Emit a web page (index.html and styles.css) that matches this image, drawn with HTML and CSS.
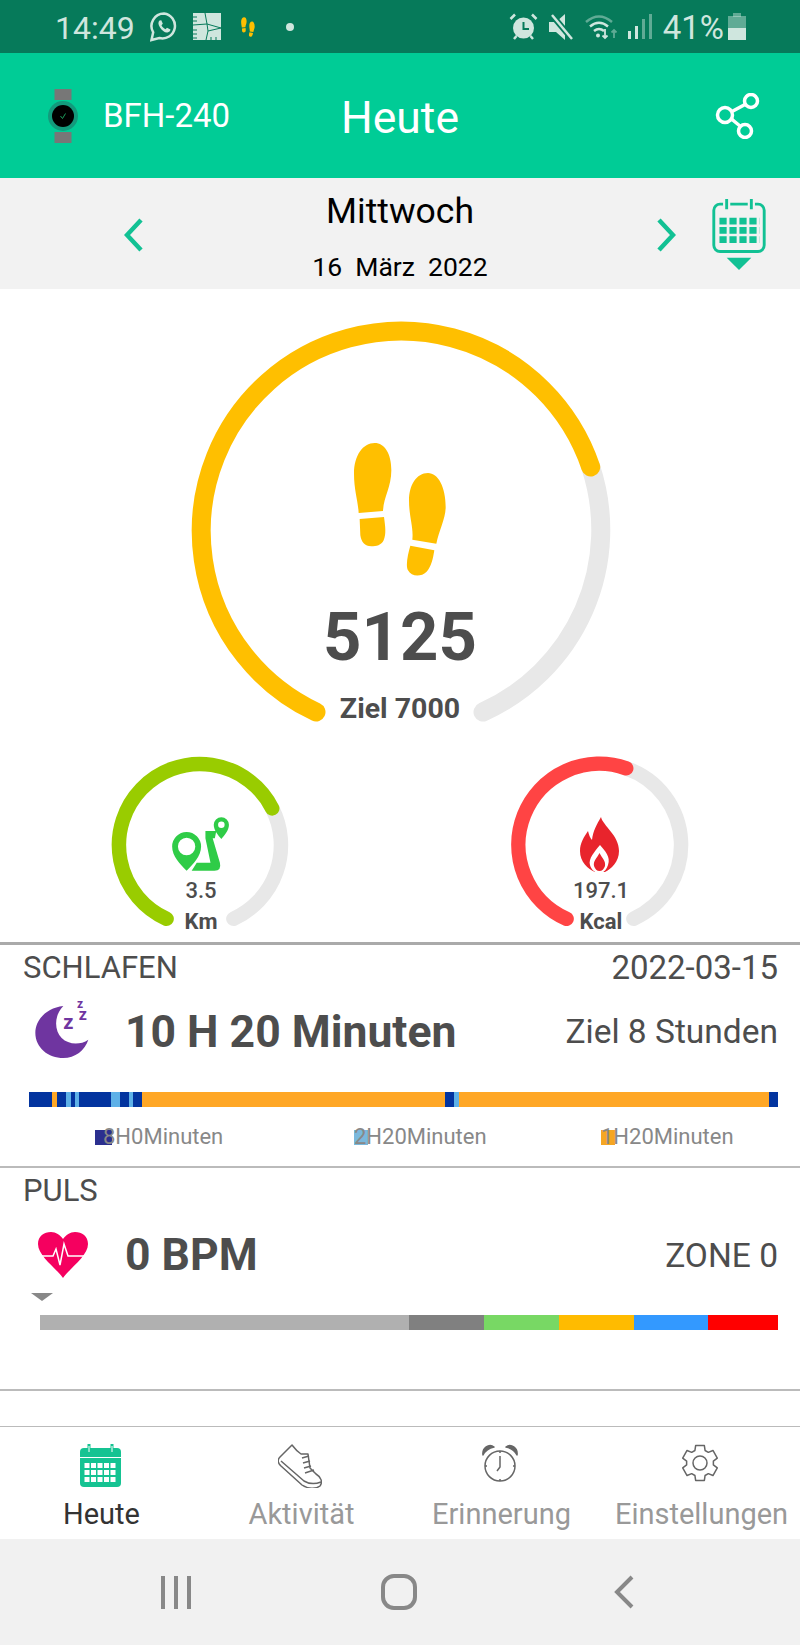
FILE: index.html
```html
<!DOCTYPE html>
<html lang="de">

<head>
    <meta charset="UTF-8" />
    <meta name="viewport" content="width=device-width, initial-scale=1.0" />
    <title>Heute</title>
    <link rel="stylesheet" href="styles.css">
</head>

<body>
    <div class="status">
        <span class="status-time">14:49</span>
        <svg class="st-whatsapp" width="28" height="30" viewBox="0 0 28 30">
            <path class="st-line" d="M14 1.5A12.5 12.5 0 0 0 3.2 20.3L1.5 28l7.8-2a12.5 12.5 0 1 0 4.7-24.5z" />
            <path class="st-fill" d="M9.5 8.5c-1.5 1.5-1.5 4 .5 7s5 5.5 7.5 5c1.5-.3 3-1.5 3-3l-3.5-1.8-1.5 1.5c-1.500-.6-3.500-2.500-4-4l1.300-1.500-1.500-3.500z" />
        </svg>
        <svg class="st-patch" width="28" height="27" viewBox="0 0 28 27">
            <rect class="st-fill" width="28" height="27" />
            <path class="st-cut" d="M12 0L14 11L28 15M14 11L0 12M14 11L15 18L13 27M15 18L28 15M0 4H4M0 8H4M0 17H4M0 21H4M0 25H4M18 27V24M23 27V24" />
        </svg>
        <svg class="st-feet icon-steps" width="16" height="20" viewBox="520 395 285 405"><use href="#steps" /></svg>
        <span class="status-dot"></span>

        <svg class="st-alarm" width="29" height="27" viewBox="0 0 29 27">
            <circle class="st-fill" cx="14.500" cy="15" r="10.500" />
            <path class="st-hand" d="M14.500 9V16H20" />
            <path class="st-line" d="M1.500 6L6 1.500M27.500 6L23 1.500M5 26L7.500 23M24 26L21.500 23" />
        </svg>
        <svg class="st-mute" width="25" height="26" viewBox="0 0 25 26">
            <path class="st-fill" d="M0 8h7L16 0v26L7 18H0z" />
            <path class="st-gap" d="M3 1L23 25" />
            <path class="st-line" d="M3 1L23 25" />
        </svg>
        <svg class="st-wifi" width="34" height="26" viewBox="0 0 34 26">
            <path class="st-line st-dim" d="M1 8Q14 -3 27 8" />
            <path class="st-line" d="M5 12.500Q14 5 23 12.500M9 17Q14 13 19 17" />
            <circle class="st-fill" cx="13" cy="21.500" r="2" />
            <path class="st-thin" d="M20 15V24M17.500 21.500L20 24L22.500 21.500" />
            <path class="st-thin st-dim" d="M29 24V16M26.500 18.500L29 16L31.500 18.500" />
        </svg>
        <svg class="st-signal" width="24" height="25" viewBox="0 0 24 25">
            <rect class="st-fill" x="0" y="17" width="3" height="8" />
            <rect class="st-fill" x="7" y="12" width="3" height="13" />
            <rect class="st-fill st-dim" x="14" y="5" width="3" height="20" />
            <rect class="st-fill st-dim" x="21" y="0" width="3" height="25" />
        </svg>
        <span class="status-batt">41%</span>
        <svg class="st-battery" width="18" height="27" viewBox="0 0 18 27">
            <rect class="st-fill st-dim" x="5" y="0" width="8" height="4" />
            <rect class="st-fill st-dim" x="0" y="3" width="18" height="12" />
            <rect class="st-fill" x="0" y="15" width="18" height="12" />
        </svg>
    </div>

    <header class="header">
        <div class="header-left">
            <svg width="32" height="54" viewBox="0 0 32 54">
                <rect x="6.500" y="0" width="17" height="11" fill="#777" />
                <rect x="6.500" y="43" width="17" height="11" fill="#777" />
                <circle cx="15" cy="27" r="15" fill="#139a7c" />
                <circle cx="15" cy="27" r="11" fill="#000" />
                <path d="M12.500 27L14.500 29.500L17.500 24.500" fill="none" stroke="#1c9c5c" stroke-width="1" />
            </svg>
            <span class="device">BFH-240</span>
        </div>
        <h1 class="title">Heute</h1>
        <div class="header-right">
            <svg width="46" height="46" viewBox="0 0 46 46" fill="none" stroke="#fff" stroke-width="3.500">
                <circle cx="10" cy="22" r="7.500" />
                <circle cx="36" cy="8" r="6.500" />
                <circle cx="30" cy="38" r="6.500" />
                <path d="M17 18.500L30 11.500M16.500 26L25 33" />
            </svg>
        </div>
    </header>

    <div class="datebar">
        <div class="date-left">
            <svg width="20" height="34" viewBox="0 0 20 34" class="chevron"><path d="M17 2L3 17L17 32" /></svg>
        </div>
        <div class="date-mid">
            <div class="day">Mittwoch</div>
            <div class="date">16&nbsp; März&nbsp; 2022</div>
        </div>
        <div class="date-right">
            <svg width="20" height="34" viewBox="0 0 20 34" class="chevron"><path d="M3 2L17 17L3 32" /></svg>
            <svg class="cal" width="54" height="72" viewBox="0 0 52 70">
                <rect x="1.500" y="5" width="49" height="46" rx="6" class="cal-frame" />
                <path class="cal-bg" d="M14 0V10M38 0V10" />
                <path class="cal-ring" d="M14 0V10M38 0V10" />
                <path class="cal-grid" d="M7 21.500H46M7 30.500H46M7 39.500H46" />
                <path class="cal-arrow" d="M14 57H38L26 69Z" />
            </svg>
        </div>
    </div>

    <main class="rings">
        <div class="ring-big">
            <svg width="440" height="430" viewBox="0 0 440 430" fill="none" stroke-width="19" stroke-linecap="round">
                <path stroke="#e8e8e8" d="M410.700 157A200 200 0 0 1 303 402" />
                <path stroke="#ffbf00" d="M136 402A200 200 0 1 1 410.700 157" />
            </svg>
            <div class="ring-big-text">
                <svg class="icon-steps" width="95" height="135" viewBox="520 395 285 405">
                    <g id="steps">
                        <path d="M585 398C615 398 635 430 635 480C635 530 612 560 610 602L537 608C535 570 523 540 523 490C523 435 550 398 585 398Z" />
                        <path d="M540 626L613 620C617 650 620 670 612 690C605 705 590 708 575 708C555 708 545 695 542 675Z" />
                        <path d="M745 488C775 488 798 530 798 590C798 625 778 660 770 700L698 688C702 650 688 620 688 570C688 525 710 488 745 488Z" />
                        <path d="M692 706L764 720C760 745 755 770 740 785C725 800 695 800 685 780C677 765 685 730 692 706Z" />
                    </g>
                </svg>
                <div class="steps">5125</div>
                <div class="goal">Ziel 7000</div>
            </div>
        </div>

        <div class="minis">
            <div class="ring-small">
                <svg width="200" height="190" viewBox="0 0 200 190" fill="none" stroke-width="14.500" stroke-linecap="round">
                    <path stroke="#e8e8e8" d="M172.200 63.400A81 81 0 0 1 133.400 173.800" />
                    <path stroke="#99cc00" d="M66.600 173.800A81 81 0 1 1 172.200 63.400" />
                </svg>
                <div class="ring-small-text">
                    <svg width="76" height="71" viewBox="0 0 210 195" class="icon-route">
                        <path fill-rule="evenodd" d="M68 170C50 152 28 130 28 103A40 40 0 0 1 108 103C108 130 86 152 68 170ZM68 79A24 24 0 1 0 68 127A24 24 0 1 0 68 79Z" />
                        <path fill-rule="evenodd" d="M164 82C155 72 143 58 143 43A21 21 0 0 1 185 43C185 58 173 72 164 82ZM164 34A9 9 0 1 0 164 52A9 9 0 1 0 164 34Z" />
                        <path d="M120 60H150L146 80H140L160 148Q165 170 145 170H82L96 148H134L120 80Z" />
                    </svg>
                    <div class="mini-value">3.5</div>
                    <div class="mini-unit">Km</div>
                </div>
            </div>
            <div class="ring-small">
                <svg width="200" height="190" viewBox="0 0 200 190" fill="none" stroke-width="14.500" stroke-linecap="round">
                    <path stroke="#e8e8e8" d="M126.200 23.300A81 81 0 0 1 133.400 173.800" />
                    <path stroke="#ff4444" d="M66.600 173.800A81 81 0 0 1 126.200 23.300" />
                </svg>
                <div class="ring-small-text">
                    <svg width="40" height="56" viewBox="0 0 40 56" class="icon-flame">
                        <path d="M21 0C23 9 39 18 39 34C39 45 31 52 25 55L15 55C8 52 0 45 0 34C0 26 4 20 8 14C9 18 10 21 12 23C13 14 17 7 21 0Z" />
                        <path fill="#fff" d="M20 28C25 34 31 40 28 48C27 52 24 55 21 56L18 56C14 55 11 52 10 48C8 42 15 34 20 28Z" />
                        <path d="M19.500 36C22 41 26 44 25 49C24 52 22 54 19.500 54C17 54 15 52 14 49C13 44 17 41 19.500 36Z" />
                    </svg>
                    <div class="mini-value">197.1</div>
                    <div class="mini-unit">Kcal</div>
                </div>
            </div>
        </div>
    </main>

    <section class="card card-sleep">
        <div class="card-head">
            <span class="card-label">SCHLAFEN</span>
            <span class="card-date">2022-03-15</span>
        </div>
        <div class="card-row row-sleep">
            <svg width="70" height="70" viewBox="0 0 210 210">
                <path fill="#6f35a0" d="M100 30C50 35 16 72 16 110C16 155 55 186 100 186C135 186 165 163 175 131C150 148 115 146 95 126C72 103 72 58 100 30Z" />
                <text x="100" y="100" class="zz zz-1">z</text>
                <text x="146" y="72" class="zz zz-2">z</text>
                <text x="141" y="36" class="zz zz-3">z</text>
            </svg>
            <span class="card-value">10 H 20 Minuten</span>
            <span class="card-goal">Ziel 8 Stunden</span>
        </div>
        <div class="bar bar-sleep">
            <span class="deep" style="flex:23"></span>
            <span class="rem" style="flex:5"></span>
            <span class="deep" style="flex:9"></span>
            <span class="light" style="flex:4.700"></span>
            <span class="deep" style="flex:4.300"></span>
            <span class="light" style="flex:4"></span>
            <span class="deep" style="flex:31.700"></span>
            <span class="light" style="flex:9.300"></span>
            <span class="deep" style="flex:8.700"></span>
            <span class="light" style="flex:4"></span>
            <span class="deep" style="flex:9.300"></span>
            <span class="rem" style="flex:302.700"></span>
            <span class="deep" style="flex:9.300"></span>
            <span class="light" style="flex:4.700"></span>
            <span class="rem" style="flex:310.700"></span>
            <span class="deep" style="flex:8.600"></span>
        </div>
        <div class="legend">
            <div class="legend-item"><span class="swatch swatch-deep"></span>8H0Minuten</div>
            <div class="legend-item"><span class="swatch swatch-light"></span>2H20Minuten</div>
            <div class="legend-item"><span class="swatch swatch-rem"></span>1H20Minuten</div>
        </div>
    </section>

    <section class="card card-pulse">
        <div class="card-head">
            <span class="card-label">PULS</span>
        </div>
        <div class="card-row row-pulse">
            <svg width="50" height="46" viewBox="0 0 50 46">
                <path fill="#f5005f" d="M25 46C18 36 0 24 0 12C0 4 6 0 13 0C18 0 22 3 25 7C28 3 32 0 37 0C44 0 50 4 50 12C50 24 32 36 25 46Z" />
                <path fill="none" stroke="#fff" stroke-width="1.500" d="M2 24H15L18 17L22 33L26 12L30 24H48" />
            </svg>
            <span class="card-value">0 BPM</span>
            <span class="card-goal">ZONE 0</span>
        </div>
        <div class="marker"></div>
        <div class="bar bar-zone">
            <span class="z0" style="flex:369"></span>
            <span class="z1" style="flex:75"></span>
            <span class="z2" style="flex:74.700"></span>
            <span class="z3" style="flex:75"></span>
            <span class="z4" style="flex:74.300"></span>
            <span class="z5" style="flex:70"></span>
        </div>
    </section>

    <div class="spacer"></div>

    <nav class="tabs">
        <div class="tab tab-active">
            <div class="tab-icon">
                <svg width="41" height="43" viewBox="0 0 41 43">
                    <rect y="4" width="41" height="39" rx="4" fill="#15c392" />
                    <path d="M9 0V8M32 0V8" stroke="#15c392" stroke-width="3" />
                    <path d="M9 2V8M32 2V8" stroke="#fff" stroke-width="1" />
                    <path d="M0 13.500H41" stroke="#fff" stroke-width="1" />
                    <path d="M4.500 21.500H37M4.500 28.500H37M4.500 35.500H37" stroke="#fff" stroke-width="5" stroke-dasharray="5 1.500" />
                </svg>
            </div>
            <span>Heute</span>
        </div>
        <div class="tab">
            <div class="tab-icon">
                <svg class="tab-line" width="44" height="44" viewBox="0 0 44 44">
                    <path d="M14 1L2 13C-1 16 0 19 3 22L24 41C30 45 38 45 42 42C45 38 43 33 38 30L32 24L30 10L23 10C20 8 17 5 14 1Z" />
                    <path d="M3 17L26 37C31 40 38 40 43 38M24 14L31 12M25 19L32 17M26 24L33 22M27 29L36 26" />
                </svg>
            </div>
            <span>Aktivität</span>
        </div>
        <div class="tab">
            <div class="tab-icon">
                <svg class="tab-line" width="38" height="38" viewBox="0 0 38 38">
                    <circle cx="19" cy="22" r="15" />
                    <path class="tab-bell" d="M2 11C1 4 8 -1 13 3C8 4 4 7 2 11Z" />
                    <path class="tab-bell" d="M36 11C37 4 30 -1 25 3C30 4 34 7 36 11Z" />
                    <path d="M19 12V23L16 27M19 7V9M19 35V37M4 22H6M32 22H34" />
                </svg>
            </div>
            <span>Erinnerung</span>
        </div>
        <div class="tab">
            <div class="tab-icon">
                <svg class="tab-line" width="36" height="38" viewBox="0 0 36 38">
                    <path d="M12.940 6.480L13.640 1.540H22.360L23.060 6.480L26.310 8.360L30.950 6.490L35.300 14.040L31.370 17.120V20.880L35.300 23.960L30.950 31.510L26.310 29.640L23.060 31.520L22.360 36.460H13.640L12.940 31.520L9.690 29.640L5.050 31.510L.7 23.960L4.630 20.880V17.120L.7 14.040L5.050 6.490L9.690 8.360Z" />
                    <circle cx="18" cy="19" r="7" />
                </svg>
            </div>
            <span>Einstellungen</span>
        </div>
    </nav>

    <div class="sysnav">
        <svg class="nav-recents" width="30" height="33" viewBox="0 0 30 33">
            <path d="M2 0V33M15 0V33M28 0V33" />
        </svg>
        <svg class="nav-home" width="36" height="36" viewBox="0 0 36 36">
            <rect x="2" y="2" width="32" height="32" rx="11" />
        </svg>
        <svg class="nav-back" width="20" height="34" viewBox="0 0 20 34">
            <path d="M18 2L3 17L18 32" />
        </svg>
    </div>
</body>

</html>
```

FILE: styles.css
```css
:root {
    --status-bg: #067a5a;
    --status-fg: #cfe6de;
    --primary: #00cc96;
    --accent: #12c194;
    --text: #4d4d4d;
    --line: #bbb;
}

* {
    box-sizing: border-box;
}

body {
    margin: 0;
    width: 800px;
    height: 1645px;
    background: #fff;
    color: var(--text);
    font-family: Roboto, sans-serif;
    overflow: hidden;
}

/* status bar */
.status {
    display: flex;
    align-items: center;
    height: 53px;
    padding-left: 55px;
    background: var(--status-bg);
    color: var(--status-fg);
}

.status-time,
.status-batt {
    padding-top: 2px;
    font-size: 32px;
}

.st-fill {
    fill: var(--status-fg);
}

.st-line {
    fill: none;
    stroke: var(--status-fg);
    stroke-width: 2.5;
}

.st-thin {
    fill: none;
    stroke: var(--status-fg);
    stroke-width: 1.8;
}

.st-dim {
    opacity: 0.45;
}

.st-cut {
    fill: none;
    stroke: var(--status-bg);
    stroke-width: 1;
}

.st-hand {
    fill: none;
    stroke: var(--status-bg);
    stroke-width: 2;
}

.st-gap {
    fill: none;
    stroke: var(--status-bg);
    stroke-width: 6;
}

.st-whatsapp {
    margin-left: 15px;
}

.st-patch {
    margin-left: 15px;
}

.st-feet {
    margin-left: 19px;
    fill: #f7c200;
}

.status-dot {
    width: 8px;
    height: 8px;
    margin-left: 30px;
    border-radius: 50%;
    background: var(--status-fg);
}

.st-alarm {
    margin-left: auto;
}

.st-mute,
.st-wifi {
    margin-left: 11px;
}

.st-signal {
    margin-left: 9px;
}

.status-batt {
    margin-left: 11px;
    font-size: 33px;
}

.st-battery {
    margin-left: 4px;
    margin-right: 54px;
}

/* green header */
.header {
    display: grid;
    grid-template-columns: 1fr auto 1fr;
    align-items: center;
    height: 125px;
    background: var(--primary);
    color: #fff;
}

.header-left {
    display: flex;
    align-items: center;
    gap: 23px;
    padding-left: 48px;
}

.device {
    font-size: 33px;
}

.title {
    margin: 0;
    padding-top: 4px;
    font-size: 44.5px;
    font-weight: 400;
}

.header-right {
    display: flex;
    justify-content: flex-end;
    padding-right: 39px;
}

/* date row */
.datebar {
    display: grid;
    grid-template-columns: 1fr auto 1fr;
    height: 111px;
    background: #f2f2f2;
}

.date-left {
    padding: 40px 0 0 124px;
}

.date-right {
    display: flex;
    justify-content: flex-end;
    padding-right: 34px;
}

.date-right .chevron {
    margin: 40px 36px 0 0;
}

.chevron {
    fill: none;
    stroke: var(--accent);
    stroke-width: 4.5;
}

.cal {
    margin-top: 21px;
}

.cal-frame {
    fill: none;
    stroke: var(--accent);
    stroke-width: 2.8;
}

.cal-bg {
    fill: none;
    stroke: #f2f2f2;
    stroke-width: 7;
}

.cal-ring {
    fill: none;
    stroke: var(--accent);
    stroke-width: 2.8;
}

.cal-grid {
    fill: none;
    stroke: var(--accent);
    stroke-width: 6.5;
    stroke-dasharray: 7 2.7;
}

.cal-arrow {
    fill: var(--accent);
}

.date-mid {
    text-align: center;
    color: #000;
}

.day {
    margin-top: 12px;
    font-size: 35.5px;
    line-height: 42px;
}

.date {
    margin-top: 19px;
    font-size: 26.5px;
    line-height: 32px;
}

/* activity rings */
.rings {
    height: 653px;
    padding-top: 21px;
}

.ring-big {
    position: relative;
    width: 440px;
    height: 430px;
    margin: 0 auto;
}

.ring-big svg,
.ring-small svg {
    display: block;
}

.ring-big-text {
    position: absolute;
    top: 132px;
    left: 0;
    right: 0;
    display: flex;
    flex-direction: column;
    align-items: center;
}

.icon-steps {
    fill: #ffbf00;
}

.steps {
    margin-top: 27px;
    font-size: 67px;
    font-weight: 700;
    line-height: 66px;
}

.goal {
    margin-top: 24px;
    font-size: 28.5px;
    font-weight: 700;
    line-height: 30px;
}

.minis {
    display: grid;
    grid-template-columns: 400px 400px;
    justify-items: center;
    margin-top: 5px;
}

.ring-small {
    position: relative;
    width: 200px;
    height: 190px;
}

.ring-small-text {
    position: absolute;
    top: 72px;
    left: 0;
    right: 0;
    display: flex;
    flex-direction: column;
    align-items: center;
}

.ring-small .icon-route {
    fill: #2fcc47;
    margin: -8px 0 -7px;
}

.icon-flame {
    fill: #e8242c;
}

.mini-value,
.mini-unit {
    padding-left: 2px;
    font-size: 22px;
    font-weight: 500;
    line-height: 26px;
}

.mini-value {
    margin-top: 5px;
}

.mini-unit {
    font-weight: 700;
    margin-top: 5px;
}

/* sleep + pulse cards */
.card {
    padding-top: 5px;
}

.card-sleep {
    height: 226px;
    border-top: 3px solid #aaa;
    border-bottom: 2px solid var(--line);
}

.card-pulse {
    height: 223px;
    padding-top: 5px;
    border-bottom: 2px solid var(--line);
}

.card-head {
    display: flex;
    justify-content: space-between;
    align-items: center;
    height: 34px;
    padding: 0 22px 0 23px;
}

.card-label {
    font-size: 31px;
}

.card-date {
    font-size: 33px;
}

.card-row {
    display: flex;
    align-items: center;
    padding-right: 22px;
}

.row-sleep {
    height: 70px;
    margin-top: 12px;
    padding-left: 30px;
}

.row-sleep .card-value {
    margin-left: 25px;
    padding-top: 2px;
}

.row-pulse {
    height: 46px;
    margin-top: 25px;
    padding-left: 38px;
}

.row-pulse .card-value {
    margin-left: 37px;
}

.card-value {
    font-size: 44.5px;
    font-weight: 700;
}

.card-goal {
    margin-left: auto;
    font-size: 33.5px;
}

.zz {
    fill: #6f35a0;
    font-family: Roboto, sans-serif;
    font-weight: 700;
}

.zz-1 {
    font-size: 60px;
}

.zz-2 {
    font-size: 48px;
}

.zz-3 {
    font-size: 36px;
}

.bar {
    display: flex;
    height: 15px;
    margin-right: 22px;
}

.bar-sleep {
    margin-left: 29px;
    margin-top: 26px;
}

.bar-zone {
    margin-left: 40px;
    margin-top: 14px;
}

.deep {
    background: #03349f;
}

.light {
    background: #5eb1e8;
}

.rem {
    background: #ffa726;
}

.z0 {
    background: #b0b0b0;
}

.z1 {
    background: #808080;
}

.z2 {
    background: #78d864;
}

.z3 {
    background: #ffbb00;
}

.z4 {
    background: #3399ff;
}

.z5 {
    background: #ff0000;
}

.legend {
    display: grid;
    grid-template-columns: 259px 247px auto;
    margin-top: 21px;
    padding-left: 95px;
    color: #888;
    font-size: 22px;
    line-height: 18px;
}

.legend-item {
    display: flex;
    align-items: center;
}

.swatch {
    width: 14px;
    height: 15px;
    margin-right: -14px;
}

.swatch-deep {
    width: 17px;
    margin-right: -9px;
    background: #2b2f8f;
}

.swatch-light {
    background: #7ab8dc;
}

.swatch-rem {
    background: #f5a623;
}

.marker {
    width: 0;
    height: 0;
    margin: 15px 0 0 31px;
    border-left: 11px solid transparent;
    border-right: 11px solid transparent;
    border-top: 8px solid #888;
}

.spacer {
    height: 35px;
}

/* bottom tabs */
.tabs {
    display: grid;
    grid-template-columns: repeat(4, 200px);
    height: 113px;
    border-top: 1px solid var(--line);
    color: #999;
    font-size: 29px;
}

.tab {
    display: flex;
    flex-direction: column;
    align-items: center;
    padding-top: 17px;
    line-height: 32px;
}

.tab span {
    margin-left: 3px;
}

.tab-active {
    color: #333;
}

.tab-icon {
    height: 44px;
    margin-bottom: 10px;
}

.tab-line {
    fill: none;
    stroke: #666;
    stroke-width: 1.500;
    stroke-linejoin: round;
}

.tab-bell {
    fill: #666;
}

/* android nav */
.sysnav {
    display: flex;
    align-items: center;
    height: 106px;
    padding-left: 161px;
    background: #f1f1f1;
}

.sysnav svg {
    fill: none;
    stroke: #888;
    stroke-width: 4;
}

.nav-home {
    margin-left: 190px;
}

.nav-back {
    margin-left: 197px;
}
```
